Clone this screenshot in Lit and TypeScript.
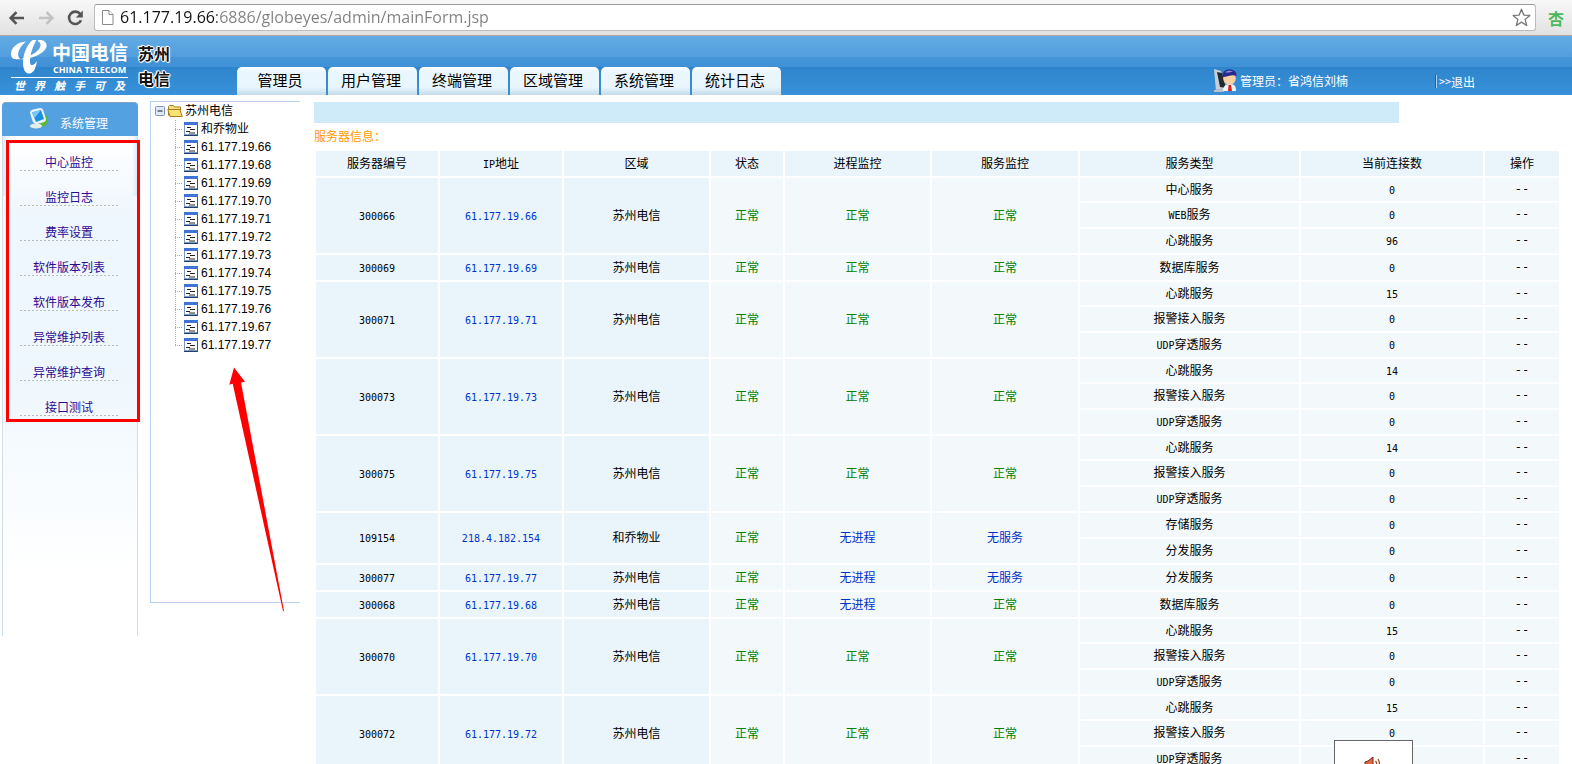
import { LitElement, html, css, svg, nothing } from "lit";
import { customElement, property } from "lit/decorators.js";

type Service = [name: string, connections: number];
interface Server {
  id: string;
  ip: string;
  area: string;
  process: boolean;
  service: boolean;
  services: Service[];
}

const beat = (n: number): Service[] => [["心跳服务", n], ["报警接入服务", 0], ["UDP穿透服务", 0]];
const suzhou = (n: number, services: Service[], process = true, service = true): Server => ({
  id: `3000${n}`, ip: `61.177.19.${n}`, area: "苏州电信", process, service, services,
});

const SERVERS: Server[] = [
  suzhou(66, [["中心服务", 0], ["WEB服务", 0], ["心跳服务", 96]]),
  suzhou(69, [["数据库服务", 0]]),
  suzhou(71, beat(15)),
  suzhou(73, beat(14)),
  suzhou(75, beat(14)),
  { id: "109154", ip: "218.4.182.154", area: "和乔物业", process: false, service: false, services: [["存储服务", 0], ["分发服务", 0]] },
  suzhou(77, [["分发服务", 0]], false, false),
  suzhou(68, [["数据库服务", 0]], false, true),
  suzhou(70, beat(15)),
  suzhou(72, beat(15)),
];

const TABS = ["管理员", "用户管理", "终端管理", "区域管理", "系统管理", "统计日志"];
const MENU = ["中心监控", "监控日志", "费率设置", "软件版本列表", "软件版本发布", "异常维护列表", "异常维护查询", "接口测试"];
const NODES = ["和乔物业", ...[66, 68, 69, 70, 71, 72, 73, 74, 75, 76, 67, 77].map((n) => `61.177.19.${n}`)];

const base = css`
  *, *::before, *::after { box-sizing: border-box; }
  a { color: inherit; text-decoration: none; }
  svg { display: block; flex: none; }
  button { border: 0; padding: 0; margin: 0; background: none; font: inherit; color: inherit; cursor: pointer; }
  ul { list-style: none; margin: 0; padding: 0; }
`;

/* Splits a label into its Latin and Chinese runs, so that each gets its own face. */
const mixed = (text: string) =>
  text.split(/([A-Za-z0-9.]+)/).filter(Boolean).map((run) =>
    /^[A-Za-z0-9.]/.test(run) ? html`<span class="latin">${run}</span>` : run);

@customElement("browser-bar")
class BrowserBar extends LitElement {
  static styles = [base, css`
    :host {
      display: flex; align-items: center; height: 36px; padding: 0 8px 0 8px;
      background: linear-gradient(#f8f8f8, #e1e1e1); border-bottom: 1px solid #b0a8a4;
    }
    .nav { display: flex; gap: 11px; margin-right: 10px; }
    .field {
      flex: 1; display: flex; align-items: center; height: 27px; margin-right: 12px; padding: 0 4px 0 6px;
      background: #fff; border: 1px solid #bcbcbc; border-top-color: #9c9c9c; border-radius: 3px;
    }
    .url {
      flex: 1; min-width: 0; height: 24px; margin-left: 5px; padding: 0 0 2px; border: 0; outline: 0;
      font: 16px "Open Sans", "Noto Sans", sans-serif;
      background: linear-gradient(90deg, #111 97px, #808080 97px);
      -webkit-background-clip: text; background-clip: text; color: transparent;
    }
    .ext { font: bold 16px "Noto Sans CJK SC", sans-serif; line-height: 20px; color: #4cb85a; }
  `];
  render() {
    return html`
      <div class="nav">
        <button aria-label="后退"><svg width="18" height="18" viewBox="0 0 18 18" fill="none" stroke="#555" stroke-width="2.6"><path d="M16 9H3M8.500 3.200L2.700 9l5.800 5.800"/></svg></button>
        <button aria-label="前进"><svg width="18" height="18" viewBox="0 0 18 18" fill="none" stroke="#c2c2c2" stroke-width="2.6"><path d="M2 9h13M9.500 3.200L15.300 9l-5.800 5.800"/></svg></button>
        <button aria-label="重新加载"><svg width="18" height="18" viewBox="0 0 18 18"><path d="M14.200 5A6.200 6.200 0 1 0 15 11.200" fill="none" stroke="#555" stroke-width="2.6"/><path d="M16.800 1.500v7H9.800z" fill="#555"/></svg></button>
      </div>
      <div class="field">
        <svg width="14" height="17" viewBox="0 0 14 17" fill="#fff" stroke="#8a8a8a"><path d="M1.500 1.500h6.500l4 4v10H1.500z"/><path d="M8 1.500v4h4"/></svg>
        <input class="url" aria-label="地址" value="61.177.19.66:6886/globeyes/admin/mainForm.jsp">
        <button aria-label="收藏"><svg width="19" height="19" viewBox="0 0 19 19" fill="#fff" stroke="#777" stroke-width="1.300" stroke-linejoin="round"><path d="M9.500 1.200l2.300 5.900 6 .3-4.700 4 1.600 6.100-5.200-3.400-5.200 3.400 1.600-6.100-4.700-4 6-.3z"/></svg></button>
      </div>
      <button class="ext">杏</button>`;
  }
}

@customElement("site-header")
class SiteHeader extends LitElement {
  static styles = [base, css`
    :host {
      display: flex; height: 59px; padding: 0 97px 0 11px; color: #fff;
      font: 12px/16px "Noto Sans CJK SC", sans-serif;
      background: linear-gradient(#62abe5 0, #529ddc 21px, #4695d9 21px, #3f90d6 31px, #2f85cc 31px, #3891d9 59px);
    }
    .logo { display: flex; width: 226px; gap: 10px; }
    .brand { width: 117px; padding-top: 4px; }
    .top { display: flex; gap: 5px; height: 38px; border-bottom: 1px solid #fff; }
    .names { flex: 1; white-space: nowrap; }
    .cn { display: block; font-size: 19px; font-weight: bold; line-height: 24px; }
    .en { display: block; padding-left: 1px; font: bold 9px/11px "Open Sans", sans-serif; }
    .motto { display: flex; justify-content: space-between; padding: 0 3px; font-size: 11px; font-weight: bold; line-height: 14px; font-style: italic; }
    .city {
      width: 34px; padding-top: 5px; font-size: 16px; font-weight: bold; line-height: 25px; color: #111;
      text-shadow: 1px 0 #fff, -1px 0 #fff, 0 1px #fff, 0 -1px #fff, 1px 1px 1px #fff, -1px -1px 1px #fff;
    }
    .tabs { display: flex; align-items: flex-end; gap: 2px; flex: 1; }
    .tab {
      width: 89px; height: 28px; padding-right: 3px; border-radius: 5px 5px 0 0; color: #000; text-align: center;
      font-size: 15px; line-height: 26px;
      background: linear-gradient(#fff, #e9f6fe 5px, #e9f6fe 20px, #c4dbe8);
    }
    .user { display: flex; align-items: center; align-self: flex-end; height: 28px; gap: 3px; }
    .out {
      display: flex; align-items: center; margin-left: 85px; padding-left: 2px;
      border-left: 1px solid #a8d0f2; box-shadow: -1px 0 #1c62a0; line-height: 13px;
    }
    .more { font: 10px/13px "DejaVu Sans Mono", monospace; }
  `];
  render() {
    return html`
      <div class="logo">
        <div class="brand">
          <div class="top">
            <svg width="36" height="36" viewBox="0 0 36 36" fill="#fff">
              <path d="M15 1.500C6 2 0 8 0 14c0 5 4 6 9.500 5C5.500 17 6 9 15 1.500z"/>
              <path d="M21.500 0C16.500 4 12 14 12 22c0 9 3 12 7 11.500 4-.800 6-6 7-12.500-3 5-7 5.500-7 1C19 14 22 6 25.500 0z"/>
              <path d="M27 0c7-1 10 4 8 8-3 6-13 10.500-26 11.500C20 16 29.500 11 29.500 5c0-2-1-3.500-2.500-3.500z"/>
            </svg>
            <div class="names"><span class="cn">中国电信</span><span class="en">CHINA TELECOM</span></div>
          </div>
          <div class="motto">${[..."世界触手可及"].map((c) => html`<span>${c}</span>`)}</div>
        </div>
        <div class="city">苏州<br>电信</div>
      </div>
      <nav class="tabs">${TABS.map((t) => html`<a class="tab" href="#">${t}</a>`)}</nav>
      <div class="user">
        <svg width="23" height="24" viewBox="0 0 23 24">
          <path d="M0 0l7 2 6 18-11 2z" fill="#c9ced4"/><path d="M3 3l5 1 4 15-6-1z" fill="#222b33"/>
          <path d="M0 21l8-2 2 4H0z" fill="#b9c0c8"/>
          <path d="M9 22c0-4 2-7 7-7s6 3 6 7z" fill="#f4f6f8"/><path d="M14.500 16h2.500l1 6h-4z" fill="#d22"/>
          <circle cx="15.500" cy="9.500" r="6.300" fill="#f8cfa4"/>
          <path d="M8.500 8C8 3 11 .5 15.500 .5S23 3 22.500 7c-5-2-8 1-14 1z" fill="#29298c"/><path d="M11 3.500c2-2 6-2 8-1-2 1-6 1-8 1z" fill="#8a90dc"/>
        </svg>
        <span>管理员：省鸿信刘楠</span>
        <a class="out" href="#"><span class="more">&gt;&gt;</span>退出</a>
      </div>`;
  }
}

@customElement("side-menu")
class SideMenu extends LitElement {
  static styles = [base, css`
    :host { display: block; width: 136px; font: 12px/16px "Noto Sans CJK SC", sans-serif; }
    .head {
      display: flex; gap: 12px; height: 34px; padding: 5px 0 0 28px; color: #fff;
      border-radius: 4px 4px 0 0; background: #53a1e1; border-top: 1px solid #7fa3c4;
    }
    .title { padding-top: 7px; }
    .body {
      height: 500px; padding-left: 17px; border: 1px solid #cfdfec; border-width: 0 1px;
      background: linear-gradient(90deg, #d6ebf8 0, transparent 6px, transparent 129px, #d6ebf8 134px) 0 0 / 100% 60px no-repeat,
        linear-gradient(#fff, #eef7fd 80px, #eef7fd 230px, #fff 440px);
    }
    .item {
      display: flex; align-items: flex-end; justify-content: center; width: 98px; height: 35px; padding-bottom: 1px;
      background: repeating-linear-gradient(90deg, #bbb 0 2px, transparent 2px 4px) 0 100% / 100% 1px no-repeat;
      color: #2d0a91;
    }
  `];
  render() {
    return html`
      <div class="head">
        <svg width="18" height="21" viewBox="0 0 18 21">
          <path d="M10 13c3-8 7-8 8-1 0 4-3 7-9 7z" fill="#5db536"/><ellipse cx="6" cy="18" rx="6" ry="2.500" fill="#e6ede2"/>
          <path d="M0 5c0-2 1-3 3-3.500L10 0c2 0 3 1 3.500 3L16 11c0 2-1 3-3 3.500L7 16c-2 0-4-1-4.500-3z" fill="#e8f2fa"/>
          <path d="M2 4.500L11 2l3 9-8 3z" fill="#1f8fe0"/><path d="M2 4.500L11 2 4.500 10z" fill="#7cc8f6"/>
        </svg>
        <span class="title">系统管理</span>
      </div>
      <ul class="body">${MENU.map((m) => html`<li><a class="item" href="#">${m}</a></li>`)}</ul>`;
  }
}

@customElement("server-tree")
class ServerTree extends LitElement {
  static styles = [base, css`
    :host {
      display: block; width: 150px; height: 502px; border: 1px solid #b9d3f0; border-right: 0;
      font: 12px/18px "Liberation Sans", "Noto Sans CJK SC", sans-serif; color: #000;
    }
    .root { display: flex; align-items: center; height: 18px; padding-left: 4px; gap: 2px; }
    .kids { margin-left: 24px; }
    .kid {
      display: flex; align-items: center; height: 18px; gap: 3px;
      background: repeating-linear-gradient(#aaa 0 1px, transparent 1px 2px) 0 0 / 1px 100% no-repeat,
        repeating-linear-gradient(90deg, #aaa 0 1px, transparent 1px 2px) 0 9px / 8px 1px no-repeat;
      padding-left: 9px;
    }
    .kid:last-child {
      background-size: 1px 10px, 8px 1px;
    }
  `];
  render() {
    return html`
      <div class="root">
        <button aria-label="折叠"><svg width="10" height="10" viewBox="0 0 10 10"><rect x=".5" y=".5" width="9" height="9" rx="1" fill="#dfe8f4" stroke="#7a96bb"/><path d="M2.500 5h5" stroke="#113"/></svg></button>
        <svg width="16" height="14" viewBox="0 0 16 14" stroke="#a87c14"><path d="M1.500 11.500v-9l1-1h4l1 1.500h6v3" fill="#f8e088"/><path d="M.8 5.500h12l2.500 7H3z" fill="#fbe277"/></svg>
        <a href="#">苏州电信</a>
      </div>
      <ul class="kids">${NODES.map((n) => html`<li class="kid">
        <svg width="14" height="14" viewBox="0 0 14 14"><path d="M0 0h14v14H0z" fill="#7d99c6"/><path d="M1 3h12v9H1z" fill="#fff"/><path d="M0 0h14v3H0z" fill="#3f74d6"/><path d="M0 13h14v1H0z" fill="#223d66"/><path d="M13 3h1v11h-1z" fill="#38557f"/><path d="M3 5.500h4M6 7.500h5M2 9.500h4M5 11h6" stroke="#222"/></svg>
        <a href="#">${n}</a></li>`)}</ul>`;
  }
}

@customElement("server-table")
class ServerTable extends LitElement {
  @property({ attribute: false }) servers: Server[] = [];
  static styles = [base, css`
    :host { display: block; font: 12px/16px "Noto Sans CJK SC", sans-serif; color: #000; }
    .band { width: 87%; height: 21px; background: #cfebfa; }
    .caption { padding: 5px 0; color: #f90; }
    .grid { width: 100%; table-layout: fixed; border-collapse: separate; border-spacing: 2px; }
    th, td { height: 24px; padding: 0 0 2px; font-weight: normal; text-align: center; vertical-align: middle; background: #f3f8fa; }
    th, .key { background: #eaf4fb; }
    th, .single td { height: 25px; }
    .first td { height: 23px; }
    .latin { font: 10px "DejaVu Sans Mono", monospace; line-height: 12px; }
    .dash { font: 12px/16px "DejaVu Sans Mono", monospace; }
    .link { color: #0033cc; }
    .ok { color: #008000; }
    .w-id { width: 122px; }
    .w-area { width: 145px; }
    .w-state { width: 72px; }
    .w-svc { width: 146px; }
    .w-type { width: 219px; }
    .w-num { width: 182px; }
    .w-op { width: 74px; }
  `];
  private status(on: boolean, missing: string) {
    return on ? html`<span class="ok">正常</span>` : html`<a class="link" href="#">${missing}</a>`;
  }
  render() {
    const heads = [["服务器编号", "w-id"], ["IP地址", "w-id"], ["区域", "w-area"], ["状态", "w-state"], ["进程监控", "w-area"],
      ["服务监控", "w-svc"], ["服务类型", "w-type"], ["当前连接数", "w-num"], ["操作", "w-op"]];
    return html`
      <div class="band"></div>
      <div class="caption">服务器信息：</div>
      <table class="grid">
        <thead><tr>${heads.map(([t, c]) => html`<th class=${c} scope="col">${mixed(t)}</th>`)}</tr></thead>
        <tbody>${this.servers.map((s) => s.services.map(([name, count], i) => {
          const n = s.services.length;
          return html`<tr class=${n === 1 ? "single" : n === 3 && i === 0 ? "first" : "row"}>
            ${i ? nothing : html`
              <td class="key" rowspan=${n}>${mixed(s.id)}</td>
              <td class="key" rowspan=${n}><a class="link" href="#">${mixed(s.ip)}</a></td>
              <td class="key" rowspan=${n}>${s.area}</td>
              <td rowspan=${n}><span class="ok">正常</span></td>
              <td rowspan=${n}>${this.status(s.process, "无进程")}</td>
              <td rowspan=${n}>${this.status(s.service, "无服务")}</td>`}
            <td>${mixed(name)}</td><td>${mixed(String(count))}</td><td class="dash">--</td>
          </tr>`;
        }))}</tbody>
      </table>`;
  }
}

@customElement("app-root")
class AppRoot extends LitElement {
  static styles = [base, css`
    :host { display: block; position: relative; height: 100vh; overflow: hidden; background: #fff; }
    .page { display: flex; align-items: flex-start; padding: 6px 11px 0 2px; }
    .tree { margin: 0 14px 0 12px; }
    .main { flex: 1; min-width: 0; padding-top: 1px; }
    .side { padding-top: 1px; }
    .frame { position: absolute; left: 6px; top: 140px; width: 134px; height: 282px; border: 3px solid #f00; pointer-events: none; }
    .arrow { position: absolute; left: 228px; top: 366px; pointer-events: none; }
    .sound {
      position: absolute; right: 159px; bottom: 0; width: 79px; height: 24px; padding: 15px 0 0 29px; overflow: hidden;
      background: #fff; border: 1px solid #666; border-bottom: 0;
    }
  `];
  render() {
    return html`
      <browser-bar></browser-bar>
      <site-header></site-header>
      <div class="page">
        <side-menu class="side"></side-menu>
        <server-tree class="tree"></server-tree>
        <server-table class="main" .servers=${SERVERS}></server-table>
      </div>
      <div class="frame"></div>
      <svg class="arrow" width="58" height="248" viewBox="0 0 58 248">${svg`<path d="M6 1.500L17 15.700l-4 .8L56 245h-1L4.700 17.700l-3.400 1z" fill="#f00"/>`}</svg>
      <button class="sound" aria-label="声音">
        <svg width="17" height="17" viewBox="0 0 17 17"><path d="M1 6l3-1 5-4v14l-5-4H1z" fill="#e0683c" stroke="#6b2a16"/><path d="M11.500 5c1.500 2 1.500 5 0 7M14 3c2 3 2 8 0 11" fill="none" stroke="#a5482a" stroke-width="1.300"/></svg>
      </button>`;
  }
}
